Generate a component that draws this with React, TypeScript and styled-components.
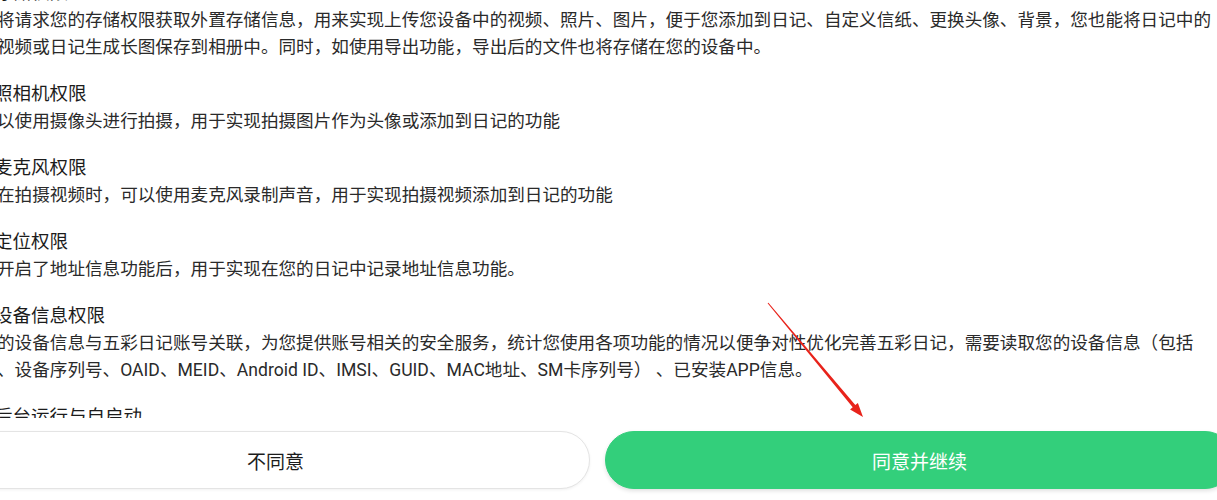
import styled, { createGlobalStyle } from 'styled-components';

const GlobalStyle = createGlobalStyle`
  html, body {
    margin: 0;
    padding: 0;
    background: #ffffff;
    overflow: hidden;
  }
  body {
    font-family: Roboto, "Noto Sans CJK SC", sans-serif;
    -webkit-font-smoothing: antialiased;
  }
`;

const Screen = styled.div`
  position: relative;
  width: 1217px;
  height: 500px;
  overflow: hidden;
  display: flex;
  flex-direction: column;
  background: #fff;
`;

const ScrollArea = styled.div`
  height: 418px;
  overflow: hidden;
  flex-shrink: 0;
`;

const Content = styled.div`
  margin-top: -21px;
  margin-left: -3px;
  display: flex;
  flex-direction: column;
  gap: 19px;
`;

const Section = styled.section`
  display: flex;
  flex-direction: column;
`;

const SectionTitle = styled.h3`
  margin: 0 0 0 -3px;
  font-size: 18.5px;
  line-height: 28px;
  font-weight: 400;
  color: #1c1c1c;
  white-space: nowrap;
`;

const Line = styled.p`
  margin: 0;
  font-size: 17.6px;
  line-height: 27px;
  color: #2a2a2a;
  white-space: nowrap;
`;

const Footer = styled.div`
  display: grid;
  grid-template-columns: 1fr 1fr;
  gap: 15px;
  padding-top: 13px;
  margin: 0 -17px 0 -39px;
`;

const PillButton = styled.button<{ $primary?: boolean }>`
  height: 58px;
  border-radius: 29px;
  font-family: Roboto, "Noto Sans CJK SC", sans-serif;
  font-size: 19px;
  cursor: pointer;
  border: 1px solid ${(p) => (p.$primary ? '#33cf7b' : '#e4e4e4')};
  background: ${(p) => (p.$primary ? '#33cf7b' : '#ffffff')};
  color: ${(p) => (p.$primary ? '#ffffff' : '#1c1c1c')};
  box-shadow: ${(p) =>
    p.$primary ? '0 2px 4px rgba(0, 0, 0, 0.12)' : '0 1px 3px rgba(0, 0, 0, 0.06)'};
`;

const Annotation = styled.svg`
  position: absolute;
  left: 0;
  top: 0;
  pointer-events: none;
`;

type Block = { title: string; lines: string[] };

const blocks: Block[] = [
  {
    title: '存储权限',
    lines: [
      '将请求您的存储权限获取外置存储信息，用来实现上传您设备中的视频、照片、图片，便于您添加到日记、自定义信纸、更换头像、背景，您也能将日记中的',
      '视频或日记生成长图保存到相册中。同时，如使用导出功能，导出后的文件也将存储在您的设备中。',
    ],
  },
  {
    title: '照相机权限',
    lines: ['以使用摄像头进行拍摄，用于实现拍摄图片作为头像或添加到日记的功能'],
  },
  {
    title: '麦克风权限',
    lines: ['在拍摄视频时，可以使用麦克风录制声音，用于实现拍摄视频添加到日记的功能'],
  },
  {
    title: '定位权限',
    lines: ['开启了地址信息功能后，用于实现在您的日记中记录地址信息功能。'],
  },
  {
    title: '设备信息权限',
    lines: [
      '的设备信息与五彩日记账号关联，为您提供账号相关的安全服务，统计您使用各项功能的情况以便争对性优化完善五彩日记，需要读取您的设备信息（包括',
      '、设备序列号、OAID、MEID、Android ID、IMSI、GUID、MAC地址、SM卡序列号） 、已安装APP信息。',
    ],
  },
  {
    title: '后台运行与自启动',
    lines: ['为保证日记提醒功能正常使用，需要后台运行与自启动权限'],
  },
];

const App = () => {
  return (
    <>
      <GlobalStyle />
      <Screen>
        <ScrollArea>
          <Content>
            {blocks.map((block) => (
              <Section key={block.title}>
                <SectionTitle>{block.title}</SectionTitle>
                {block.lines.map((line) => (
                  <Line key={line}>{line}</Line>
                ))}
              </Section>
            ))}
          </Content>
        </ScrollArea>
        <Footer>
          <PillButton>不同意</PillButton>
          <PillButton $primary>同意并继续</PillButton>
        </Footer>
        {/* red arrow drawn over the screenshot */}
        <Annotation width="1217" height="500" viewBox="0 0 1217 500">
          <polygon
            points="767.6,303.3 852.7,407.3 850.1,409.4 863,417 857.9,403 855.3,405.1 768.4,302.7"
            fill="#e8231b"
          />
        </Annotation>
      </Screen>
    </>
  );
};

export default App;
